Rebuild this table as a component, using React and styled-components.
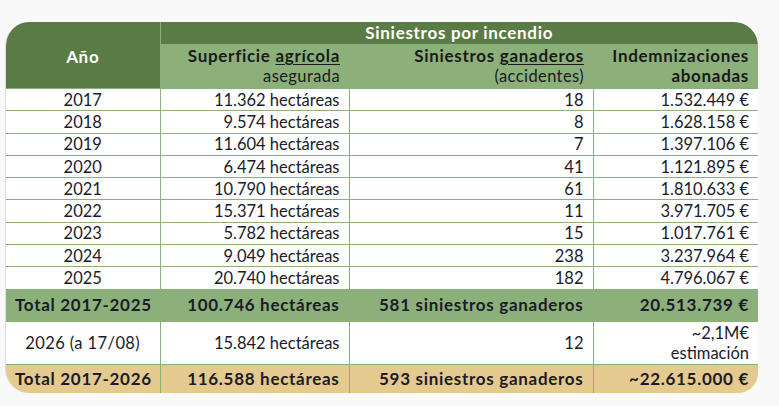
import React from "react";
import styled, { createGlobalStyle } from "styled-components";

const Global = createGlobalStyle`
  html, body { margin: 0; padding: 0; background: #f9f9f9; }
  body { font-family: Lato, "Open Sans", sans-serif; color: #1b1b29; }
`;

const Page = styled.div`
  padding: 22px 21px 0 5px;
`;

const Frame = styled.div`
  width: 753px;
  border-radius: 24px 24px 20px 24px;
  overflow: hidden;
  border-left: 1px solid #dcdcdc;
  box-sizing: border-box;
`;

const Table = styled.table`
  width: 100%;
  border-collapse: collapse;
  table-layout: fixed;
  font-size: 16.5px;
`;

const HeadCell = styled.th`
  background: ${(p) => (p.$dark ? "#5b7b46" : "#8cb07a")};
  color: ${(p) => (p.$dark ? "#ffffff" : "#1a1a1a")};
  font-weight: 700;
  font-size: 17px;
  letter-spacing: 0.7px;
  text-align: ${(p) => p.$align || "right"};
  padding: ${(p) => (p.$lower ? "4px 9px 0" : "0 9px")};
  height: ${(p) => p.$h}px;
  line-height: 20px;
  vertical-align: middle;
  border-left: ${(p) => (p.$sep ? "1px solid #8cb07a" : "none")};
`;

const Under = styled.span`
  text-decoration: underline;
  text-underline-offset: 2px;
`;

const Light = styled.span`
  font-weight: 400;
  font-size: 16.5px;
  letter-spacing: 0.4px;
`;

const Row = styled.tr`
  background: ${(p) =>
    p.$variant === "total" ? "#8cb07a" : p.$variant === "gold" ? "#e4ca8e" : "#ffffff"};
  font-weight: ${(p) => (p.$variant ? 700 : 400)};
  font-size: ${(p) => (p.$variant ? "17px" : "16.5px")};
  letter-spacing: ${(p) => (p.$variant ? "0.7px" : "0")};
  height: ${(p) => p.$h || 22.3}px;
`;

const Cell = styled.td`
  text-align: ${(p) => p.$align || "right"};
  padding: 0 9px;
  line-height: 20px;
  border-top: 1px solid #8cb07a;
  border-left: ${(p) => (p.$first ? "none" : "1px solid #8cb07a")};
  white-space: nowrap;
  letter-spacing: ${(p) => (p.$wide ? "0.4px" : "inherit")};
`;

const years = [
  ["2017", "11.362 hectáreas", "18", "1.532.449 €"],
  ["2018", "9.574 hectáreas", "8", "1.628.158 €"],
  ["2019", "11.604 hectáreas", "7", "1.397.106 €"],
  ["2020", "6.474 hectáreas", "41", "1.121.895 €"],
  ["2021", "10.790 hectáreas", "61", "1.810.633 €"],
  ["2022", "15.371 hectáreas", "11", "3.971.705 €"],
  ["2023", "5.782 hectáreas", "15", "1.017.761 €"],
  ["2024", "9.049 hectáreas", "238", "3.237.964 €"],
  ["2025", "20.740 hectáreas", "182", "4.796.067 €"],
];

export default function App() {
  return (
    <Page>
      <Global />
      <Frame>
        <Table>
          <colgroup>
            <col style={{ width: 154 }} />
            <col style={{ width: 189 }} />
            <col style={{ width: 244 }} />
            <col style={{ width: 165 }} />
          </colgroup>
          <thead>
            <tr>
              <HeadCell $dark $lower rowSpan={2} $align="center" $h={22}>
                Año
              </HeadCell>
              <HeadCell $dark colSpan={3} $align="center" $h={22} $sep>
                Siniestros por incendio
              </HeadCell>
            </tr>
            <tr>
              <HeadCell $h={44} $sep>
                Superficie <Under>agrícola</Under>
                <br />
                <Light>asegurada</Light>
              </HeadCell>
              <HeadCell $h={44}>
                Siniestros <Under>ganaderos</Under>
                <br />
                <Light>(accidentes)</Light>
              </HeadCell>
              <HeadCell $h={44}>
                Indemnizaciones
                <br />
                abonadas
              </HeadCell>
            </tr>
          </thead>
          <tbody>
            {years.map(([y, s, n, e]) => (
              <Row key={y}>
                <Cell $first $align="center">{y}</Cell>
                <Cell>{s}</Cell>
                <Cell>{n}</Cell>
                <Cell>{e}</Cell>
              </Row>
            ))}
            <Row $variant="total" $h={32}>
              <Cell $first $align="center">Total 2017-2025</Cell>
              <Cell>100.746 hectáreas</Cell>
              <Cell>581 siniestros ganaderos</Cell>
              <Cell>20.513.739 €</Cell>
            </Row>
            <Row $h={43}>
              <Cell $first $wide $align="center">2026 (a 17/08)</Cell>
              <Cell>15.842 hectáreas</Cell>
              <Cell>12</Cell>
              <Cell>
                ~2,1M€
                <br />
                estimación
              </Cell>
            </Row>
            <Row $variant="gold" $h={29}>
              <Cell $first $align="center">Total 2017-2026</Cell>
              <Cell>116.588 hectáreas</Cell>
              <Cell>593 siniestros ganaderos</Cell>
              <Cell>~22.615.000 €</Cell>
            </Row>
          </tbody>
        </Table>
      </Frame>
    </Page>
  );
}
